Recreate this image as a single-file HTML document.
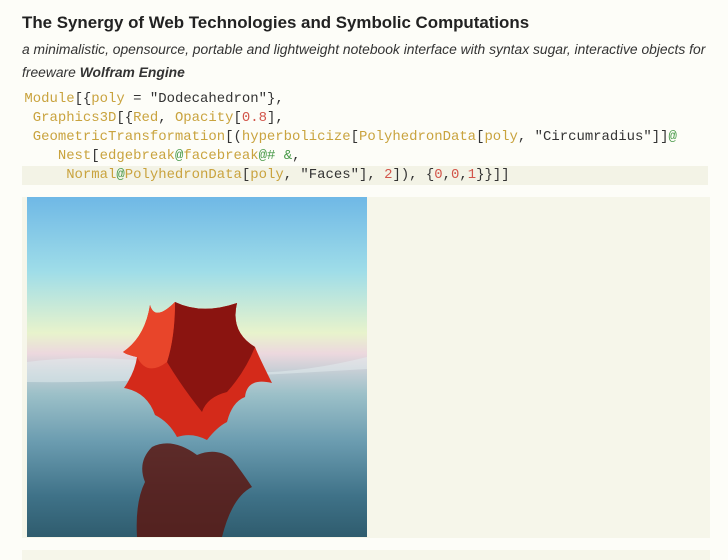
<!DOCTYPE html><html><head><style>
body{margin:0;width:728px;height:560px;background:#fdfdf8;overflow:hidden;font-family:"Liberation Sans",sans-serif;}
h1{position:absolute;left:22px;top:13px;margin:0;font-size:16.9px;font-weight:bold;color:#222;}
.sub{position:absolute;left:22px;top:38px;width:700px;font-size:13.85px;font-style:italic;line-height:23px;color:#333;}
pre{position:absolute;left:16px;top:90px;margin:0;font-family:"Liberation Mono",monospace;font-size:13.95px;line-height:19px;color:#333;}
.k{color:#c9a33e}.n{color:#d2554a}.g{color:#4a9a4a}
.hl{position:absolute;left:22px;top:166px;width:686px;height:19px;background:#f3f3e6;}
.out{position:absolute;left:22px;top:197px;width:688px;height:341px;background:#f6f6ea;}
.foot{position:absolute;left:22px;top:550px;width:688px;height:10px;background:#f6f6ea;}
.img{position:absolute;left:27px;top:197px;width:340px;height:340px;overflow:hidden;
background:linear-gradient(180deg,#6fb8e6 0%,#9fdde8 22%,#e8f3cc 40%,#ecd8de 46%,#c0cdd4 52%,#9cc0c8 58%,#6b9cb0 72%,#3f7288 88%,#2f5c6e 100%);}
</style></head><body>
<h1>The Synergy of Web Technologies and Symbolic Computations</h1>
<div class="sub">a minimalistic, opensource, portable and lightweight notebook interface with syntax sugar, interactive objects for freeware <b>Wolfram Engine</b></div>
<div class="hl"></div>
<pre> <span class="k">Module</span>[{<span class="k">poly</span> = "Dodecahedron"},
  <span class="k">Graphics3D</span>[{<span class="k">Red</span>, <span class="k">Opacity</span>[<span class="n">0.8</span>],
  <span class="k">GeometricTransformation</span>[(<span class="k">hyperbolicize</span>[<span class="k">PolyhedronData</span>[<span class="k">poly</span>, "Circumradius"]]<span class="g">@</span>
     <span class="k">Nest</span>[<span class="k">edgebreak</span><span class="g">@</span><span class="k">facebreak</span><span class="g">@#</span> <span class="g">&amp;</span>,
      <span class="k">Normal</span><span class="g">@</span><span class="k">PolyhedronData</span>[<span class="k">poly</span>, "Faces"], <span class="n">2</span>]), {<span class="n">0</span>,<span class="n">0</span>,<span class="n">1</span>}}]]</pre>
<div class="out"></div>
<div class="img"><svg width="340" height="340" viewBox="0 0 340 340">
<path d="M0 165 Q80 155 160 170 T340 160 L340 172 Q240 178 150 182 T0 185Z" fill="#e3eef0" opacity="0.5"/>
<path d="M123 108 Q128 125 148 105 Q175 118 210 106 Q203 135 228 150 Q232 160 245 186 Q220 180 218 200 Q205 205 200 225 Q190 230 180 243 Q165 235 150 240 Q142 225 128 218 Q120 195 97 191 Q108 175 110 160 Q100 158 96 155 Q118 140 123 108Z" fill="#d42a1a"/>
<path d="M148 105 Q175 118 210 106 Q203 135 228 150 Q218 175 200 195 Q180 200 175 215 Q155 190 140 165 Q148 140 148 105Z" fill="#8a1410"/>
<path d="M123 108 Q128 125 148 105 Q148 140 140 165 Q120 180 110 160 Q100 158 96 155 Q118 140 123 108Z" fill="#e8452a"/>
<path d="M125 250 Q145 240 170 258 Q190 250 205 262 Q215 275 225 290 Q205 300 195 340 L110 340 Q108 305 118 285 Q110 265 125 250Z" fill="#5a1812" opacity="0.85"/>
</svg></div>
<div class="foot"></div>
</body></html>
